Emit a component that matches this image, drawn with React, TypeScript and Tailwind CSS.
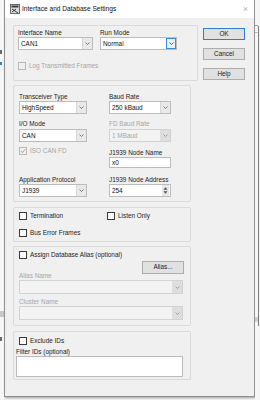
import clsx from 'clsx';
import type { ReactNode } from 'react';

function Chevron({ color = '#6b6b6b' }: { color?: string }) {
  return (
    <svg width="7" height="7" viewBox="0 0 7 7">
      <polyline points="1.5,2.5 3.5,4.5 5.5,2.5" fill="none" stroke={color} strokeWidth="0.9" />
    </svg>
  );
}

function Label({ children, disabled, className }: { children: ReactNode; disabled?: boolean; className?: string }) {
  return (
    <div
      className={clsx(
        'h-[8px] leading-[8px] whitespace-nowrap',
        disabled ? 'text-[#a6a6a6]' : 'text-[#1c1c1c]',
        className
      )}
    >
      {children}
    </div>
  );
}

function Combo({
  value,
  className,
  disabled,
  focused,
}: {
  value?: string;
  className?: string;
  disabled?: boolean;
  focused?: boolean;
}) {
  return (
    <div
      className={clsx(
        'flex h-[13px] border',
        disabled ? 'bg-[#f3f3f3] border-[#d2d2d2]' : 'bg-white border-[#bcbcbc]',
        className
      )}
    >
      <div
        className={clsx(
          'flex-1 pl-[2px] leading-[11px] whitespace-nowrap overflow-hidden',
          disabled ? 'text-[#a6a6a6]' : 'text-[#111]'
        )}
      >
        {value}
      </div>
      <div
        className={clsx(
          'w-[10px] flex items-center justify-center',
          focused
            ? 'bg-[#e5f1fb] border border-[#3c8fd6]'
            : disabled
              ? 'bg-[#dedede]'
              : 'bg-[#e9e9e9] border-l border-[#d6d6d6]'
        )}
      >
        <Chevron color={focused ? '#2b5f9c' : disabled ? '#9a9a9a' : '#707070'} />
      </div>
    </div>
  );
}

function Check({ label, disabled, checked, className }: { label: string; disabled?: boolean; checked?: boolean; className?: string }) {
  return (
    <div className={clsx('flex items-center h-[8px] gap-[3px]', className)}>
      <div
        className={clsx(
          'w-[8px] h-[8px] border flex items-center justify-center',
          disabled ? 'border-[#b9b9b9] bg-[#f0f0f0]' : 'border-[#3a3a3a] bg-white'
        )}
      >
        {checked && (
          <svg width="6" height="6" viewBox="0 0 6 6">
            <polyline points="0.8,3 2.4,4.6 5.2,1.2" fill="none" stroke="#9a9a9a" strokeWidth="0.9" />
          </svg>
        )}
      </div>
      <span className={clsx('leading-[8px] whitespace-nowrap', disabled ? 'text-[#a6a6a6]' : 'text-[#1c1c1c]')}>
        {label}
      </span>
    </div>
  );
}

function Btn({ children, primary, className }: { children: ReactNode; primary?: boolean; className?: string }) {
  return (
    <div
      className={clsx(
        'h-[12px] w-[42px] flex items-center justify-center bg-[#e1e1e1] border text-[#1c1c1c] leading-none',
        primary ? 'border-[#2f7fd0]' : 'border-[#adadad]',
        className
      )}
    >
      {children}
    </div>
  );
}

function Group({ children, className }: { children: ReactNode; className?: string }) {
  return <div className={clsx('border border-[#dadada] rounded-[2px]', className)}>{children}</div>;
}

export default function App() {
  return (
    <div className="w-[260px] h-[400px] flex bg-[#f2f2f2] font-['Liberation_Sans',Arial,sans-serif] text-[6.4px] overflow-hidden">
      {/* app behind the dialog */}
      <div className="w-[4px] flex flex-col bg-[#f7f7f7]">
        <div className="h-[50px]" />
        <div className="h-[4px] w-[2px] bg-[#6b6b6b]" />
        <div className="h-[8px]" />
        <div className="h-[3px] w-[2px] bg-[#3b7bc4]" />
        <div className="h-[246px]" />
        <div className="h-[6px] bg-[#c9c9c9]" />
        <div className="h-[20px]" />
        <div className="h-[4px] w-[2px] bg-[#6b6b6b]" />
      </div>

      <div className="w-[251px] h-[397px] flex flex-col border-x border-b border-[#8f8f8f] bg-[#f0f0f0] shadow-[1px_1px_2px_rgba(0,0,0,0.35)]">
        {/* title bar */}
        <div className="h-[18px] bg-white flex items-center pl-[5px] pr-[6px]">
          <svg width="10" height="10" viewBox="0 0 10 10">
            <rect x="0.5" y="0.5" width="9" height="9" fill="#d9dde2" stroke="#4a4a4a" strokeWidth="0.8" />
            <rect x="1.5" y="1.5" width="7" height="2" fill="#3d3d3d" />
            <path d="M2 5 L8 9 M2 8 L6 5" stroke="#2a2a2a" strokeWidth="0.9" />
          </svg>
          <span className="ml-[2px] text-[6.6px] text-[#111] whitespace-nowrap">Interface and Database Settings</span>
          <span className="ml-auto text-[9px] leading-none text-[#b5b5b5]">×</span>
        </div>

        {/* body */}
        <div className="flex pl-[8px] pt-[7px]">
          <div className="w-[185px] flex flex-col">
            {/* interface */}
            <Group className="h-[56px] pl-[4px] pt-[3px]">
              <div className="flex">
                <div className="w-[75px]">
                  <Label>Interface Name</Label>
                  <Combo value="CAN1" />
                </div>
                <div className="w-[77px] ml-[7px]">
                  <Label>Run Mode</Label>
                  <Combo value="Normal" focused />
                </div>
              </div>
              <Check className="mt-[12px]" label="Log Transmitted Frames" disabled />
            </Group>

            {/* transceiver */}
            <Group className="mt-[4px] w-[178px] h-[117px] pl-[5px] pt-[7px]">
              <div className="flex">
                <div className="w-[68px] flex flex-col">
                  <Label>Transceiver Type</Label>
                  <Combo value="HighSpeed" />
                  <Label className="mt-[6px]">I/O Mode</Label>
                  <Combo className="mt-[1px]" value="CAN" />
                  <Check className="mt-[5px]" label="ISO CAN FD" disabled checked />
                  <Label className="mt-[21px]">Application Protocol</Label>
                  <Combo value="J1939" />
                </div>
                <div className="w-[62px] ml-[22px] flex flex-col">
                  <Label>Baud Rate</Label>
                  <Combo value="250 kBaud" />
                  <Label className="mt-[6px]" disabled>
                    FD Baud Rate
                  </Label>
                  <Combo className="mt-[1px]" value="1 MBaud" disabled />
                  <Label className="mt-[7px]">J1939 Node Name</Label>
                  <div className="h-[11px] bg-white border border-[#bcbcbc] pl-[2px] leading-[9px] text-[#111]">x0</div>
                  <Label className="mt-[8px]">J1939 Node Address</Label>
                  <div className="h-[13px] bg-white border border-[#bcbcbc] flex">
                    <div className="flex-1 pl-[2px] leading-[11px] text-[#111]">254</div>
                    <div className="w-[7px] mr-[1px] flex flex-col items-center justify-center gap-[1px] bg-[#e6e6e6]">
                      <svg width="5" height="3" viewBox="0 0 5 3">
                        <polygon points="0.5,2.8 2.5,0.3 4.5,2.8" fill="#505050" />
                      </svg>
                      <svg width="5" height="3" viewBox="0 0 5 3">
                        <polygon points="0.5,0.2 2.5,2.7 4.5,0.2" fill="#505050" />
                      </svg>
                    </div>
                  </div>
                </div>
              </div>
            </Group>

            {/* termination */}
            <Group className="mt-[5px] w-[178px] h-[35px] pl-[5px] pt-[4px]">
              <div className="flex">
                <Check className="w-[88px]" label="Termination" />
                <Check label="Listen Only" />
              </div>
              <Check className="mt-[9px]" label="Bus Error Frames" />
            </Group>

            {/* alias */}
            <Group className="mt-[4px] w-[178px] h-[80px] pl-[5px] pt-[4px]">
              <Check label="Assign Database Alias (optional)" />
              <div className="flex justify-end pr-[6px]">
                <Btn className="mt-[2px] h-[13px]">Alias...</Btn>
              </div>
              <Label className="-mt-[2px]" disabled>
                Alias Name
              </Label>
              <Combo className="w-[164px] h-[14px]" disabled />
              <Label className="mt-[4px]" disabled>
                Cluster Name
              </Label>
              <Combo className="w-[164px] h-[14px]" disabled />
            </Group>

            {/* filter */}
            <Group className="mt-[5px] w-[178px] h-[49px] pl-[2px] pt-[5px]">
              <Check className="ml-[3px]" label="Exclude IDs" />
              <Label className="mt-[3px]">Filter IDs (optional)</Label>
              <div className="w-[167px] h-[21px] bg-white border border-[#bcbcbc]" />
            </Group>
          </div>

          {/* buttons */}
          <div className="ml-[5px] flex flex-col">
            <Btn primary className="mt-[3px]">
              OK
            </Btn>
            <Btn className="mt-[8px]">Cancel</Btn>
            <Btn className="mt-[8px]">Help</Btn>
          </div>
        </div>
      </div>

      <div className="flex-1 flex">
        <div className="flex-1 flex flex-col bg-[#f7f7f7]">
          <div className="h-[25px]" />
          <div className="h-[1px] bg-[#9a9a9a]" />
          <div className="h-[6px]" />
          <div className="h-[1px] bg-[#c0c0c0]" />
          <div className="h-[284px]" />
          <div className="h-[5px] bg-[#cfcfcf]" />
        </div>
        <div className="w-[1px] flex flex-col">
          <div className="h-[26px]" />
          <div className="h-[300px] bg-[#7a7a7a]" />
        </div>
        <div className="w-[1px] bg-[#f7f7f7]" />
      </div>
    </div>
  );
}
